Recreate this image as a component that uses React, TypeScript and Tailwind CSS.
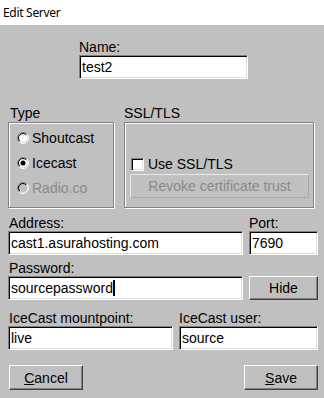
import React, { useId } from 'react';

const Field = ({ value, caret }: { value: string; caret?: boolean }) => (
  <div className="h-[24px] bg-white border border-t-[#808080] border-l-[#808080] border-b-white border-r-white shadow-[inset_1px_1px_0_#000,inset_-1px_-1px_0_#dfdfdf] flex items-center pl-[2px] whitespace-nowrap overflow-hidden">
    <span>{value}</span>
    {caret && <span className="inline-block w-[2px] h-[16px] bg-black"></span>}
  </div>
);

const Button = ({ children, className = '' }: { children: React.ReactNode; className?: string }) => (
  <div className={`flex items-center justify-center bg-[#c0c0c0] border border-t-white border-l-white border-b-[#404040] border-r-[#404040] shadow-[inset_-1px_-1px_0_#808080] ${className}`}>
    {children}
  </div>
);

const Radio = ({ checked, disabled }: { checked?: boolean; disabled?: boolean }) => {
  const id = useId().replace(/:/g, '');
  return (
    <svg width="12" height="12" viewBox="0 0 12 12">
      <defs>
        <linearGradient id={`o${id}`} x1="0" y1="0" x2="1" y2="1">
          <stop offset="50%" stopColor="#808080" />
          <stop offset="50%" stopColor="#ffffff" />
        </linearGradient>
        <linearGradient id={`i${id}`} x1="0" y1="0" x2="1" y2="1">
          <stop offset="50%" stopColor="#000000" />
          <stop offset="50%" stopColor="#dfdfdf" />
        </linearGradient>
      </defs>
      <circle cx="6" cy="6" r="5.5" fill="none" stroke={`url(#o${id})`} strokeWidth="1" />
      <circle cx="6" cy="6" r="4.5" fill={disabled ? '#c0c0c0' : '#ffffff'} stroke={`url(#i${id})`} strokeWidth="1" />
      {checked && <circle cx="6" cy="6" r="2.5" fill="#000" />}
    </svg>
  );
};

const GroupBox = ({ children, className = '' }: { children: React.ReactNode; className?: string }) => (
  <div className={`h-[86px] border border-[#808080] shadow-[inset_1px_1px_0_#fff,1px_1px_0_#fff] ${className}`}>
    {children}
  </div>
);

export default function App() {
  return (
    <div className="w-[324px] h-[398px] bg-[#c0c0c0] font-['Liberation_Sans',Arial,sans-serif] text-[14px] leading-[16px] text-black">
      <div className="h-[25px] bg-white flex items-center pl-[3px] text-[12px] font-['Noto_Sans',sans-serif] tracking-[-0.3px]">
        Edit Server
      </div>
      <div className="pl-[8px] pr-[6px] pt-[14px]">
        <div className="ml-[71px] w-[169px]">
          <div>Name:</div>
          <Field value="test2" />
        </div>

        <div className="mt-[26px] flex gap-[10px]">
          <div className="w-[106px]">
            <div className="pl-[2px] mb-[1px]">Type</div>
            <GroupBox className="pt-[2px] pl-[8px]">
              <div className="h-[25px] flex items-center gap-[3px]">
                <Radio />
                <span>Shoutcast</span>
              </div>
              <div className="h-[25px] flex items-center gap-[3px]">
                <Radio checked />
                <span>Icecast</span>
              </div>
              <div className="h-[25px] flex items-center gap-[3px] text-[#8a8a8a]">
                <Radio disabled />
                <span>Radio.co</span>
              </div>
            </GroupBox>
          </div>
          <div className="w-[190px]">
            <div className="mb-[1px]">SSL/TLS</div>
            <GroupBox className="pt-[33px] pl-[5px]">
              <div className="h-[16px] flex items-center gap-[4px] pl-[1px]">
                <div className="w-[13px] h-[13px] bg-white border border-t-[#808080] border-l-[#808080] border-b-white border-r-white shadow-[inset_1px_1px_0_#000,inset_-1px_-1px_0_#dfdfdf]"></div>
                <span>Use SSL/TLS</span>
              </div>
              <div className="mt-[2px] w-[179px] h-[24px] flex items-center justify-center border border-t-[#e8e8e8] border-l-[#e8e8e8] border-b-[#a8a8a8] border-r-[#a8a8a8] text-[#8a8a8a]">
                Revoke certificate trust
              </div>
            </GroupBox>
          </div>
        </div>

        <div className="mt-[7px] flex gap-[6px]">
          <div className="w-[235px]">
            <div className="pl-[1px]">Address:</div>
            <Field value="cast1.asurahosting.com" />
          </div>
          <div className="w-[69px]">
            <div>Port:</div>
            <Field value="7690" />
          </div>
        </div>

        <div className="mt-[5px] flex gap-[6px]">
          <div className="w-[235px]">
            <div className="pl-[1px]">Password:</div>
            <Field value="sourcepassword" caret />
          </div>
          <div className="w-[69px] flex flex-col justify-end">
            <Button className="h-[24px]">Hide</Button>
          </div>
        </div>

        <div className="mt-[10px] flex gap-[6px]">
          <div className="w-[165px]">
            <div className="pl-[1px]">IceCast mountpoint:</div>
            <Field value="live" />
          </div>
          <div className="w-[139px]">
            <div>IceCast user:</div>
            <Field value="source" />
          </div>
        </div>

        <div className="mt-[15px] flex justify-between">
          <Button className="ml-[1px] w-[74px] h-[25px]">
            <span><span className="underline underline-offset-1">C</span>ancel</span>
          </Button>
          <Button className="w-[74px] h-[25px]">
            <span><span className="underline underline-offset-1">S</span>ave</span>
          </Button>
        </div>
      </div>
    </div>
  );
}
